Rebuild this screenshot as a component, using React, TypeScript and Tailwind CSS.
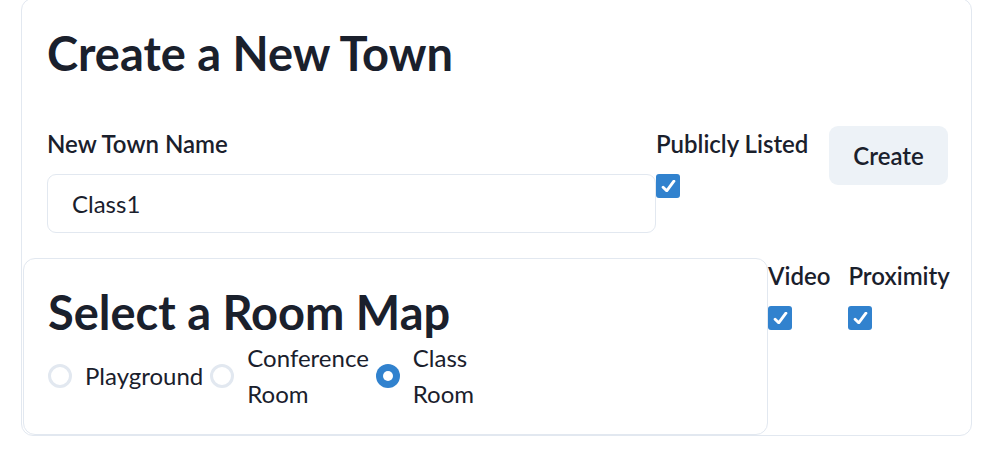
import React from "react";

const Check = () => (
  <span className="flex h-[24px] w-[24px] items-center justify-center rounded-[3px] bg-[#3182ce]">
    <svg width="15" height="12" viewBox="0 0 12 10" fill="none">
      <polyline points="1.5 6 4.5 9 10.5 1" stroke="white" strokeWidth="2.4" strokeLinecap="round" strokeLinejoin="round" />
    </svg>
  </span>
);

const Radio = ({ label, checked }: { label: string; checked?: boolean }) => (
  <label className="flex items-center">
    {checked ? (
      <span className="flex h-[24px] w-[24px] shrink-0 items-center justify-center rounded-full bg-[#3182ce]">
        <span className="h-[10px] w-[10px] rounded-full bg-white" />
      </span>
    ) : (
      <span className="h-[24px] w-[24px] shrink-0 rounded-full border-[3px] border-[#e2e8f0]" />
    )}
    <span className="ml-[13px] w-min text-[24px] leading-[36px]">{label}</span>
  </label>
);

const Toggle = ({ label, wide }: { label: string; wide?: boolean }) => (
  <div className={wide ? "flex w-[173px] shrink-0 flex-col" : "flex shrink-0 flex-col"}>
    <span className="mr-[18px] mb-[12px] text-[24px] font-semibold leading-[36px]">{label}</span>
    <Check />
  </div>
);

export default function App() {
  return (
    <div className="h-[463px] w-[1008px] bg-white text-[#1a202c]" style={{ fontFamily: 'Lato, sans-serif' }}>
      <div className="ml-[21px] mt-[-2px] w-[951px] rounded-[12px] border border-[#e2e8f0] pl-[25px] pr-[23px] pt-[26px]">
        <h1 className="text-[47px] font-bold leading-[56px]">Create a New Town</h1>

        <div className="mt-[45px] flex items-start">
          <div className="flex flex-1 flex-col">
            <span className="mb-[12px] text-[24px] font-semibold leading-[36px]">New Town Name</span>
            <input
              readOnly
              value="Class1"
              className="h-[59px] w-full rounded-[9px] border border-[#e2e8f0] px-[24px] text-[24px] outline-none"
            />
          </div>
          <Toggle label="Publicly Listed" wide />
          <button className="h-[59px] w-[119px] shrink-0 rounded-[9px] bg-[#edf2f7] text-[24px] font-semibold">Create</button>
        </div>

        <div className="ml-[-24px] mt-[25px] flex items-start">
          <div className="w-[745px] shrink-0 rounded-[12px] border border-[#e2e8f0] pl-[24px] pt-[25px] pb-[22px]">
            <h2 className="text-[47px] font-bold leading-[56px]">Select a Room Map</h2>
            <div className="flex items-center gap-[7px]">
              <Radio label="Playground" />
              <Radio label="Conference Room" />
              <Radio label="Class Room" checked />
            </div>
          </div>
          <Toggle label="Video" />
          <Toggle label="Proximity" />
        </div>
      </div>
    </div>
  );
}
